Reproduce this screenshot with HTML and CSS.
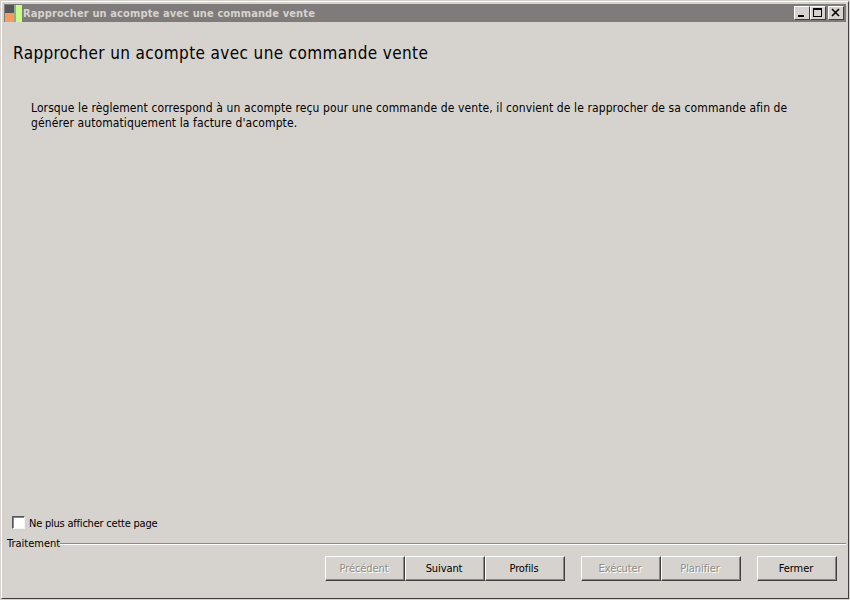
FILE: index.html
```html
<!DOCTYPE html>
<html lang="fr">
<head>
<meta charset="utf-8">
<title>Rapprocher un acompte avec une commande vente</title>
<link rel="stylesheet" href="styles.css">
</head>
<body>
<div class="window">
  <header class="titlebar">
    <svg class="app-icon" width="17" height="17" viewBox="0 0 17 17">
      <rect x="0" y="0" width="9" height="8" fill="#55555a"/>
      <rect x="0" y="8" width="9" height="9" fill="#f79a5e"/>
      <rect x="9" y="0" width="2" height="17" fill="#8fae8a"/>
      <rect x="11" y="0" width="6" height="17" fill="#c8fb88"/>
    </svg>
    <span class="title-text">Rapprocher un acompte avec une commande vente</span>
    <div class="caption-buttons">
      <button class="cap-btn" aria-label="Réduire"><svg width="14" height="12" viewBox="0 0 14 12"><rect x="3" y="8" width="6" height="2" fill="#000"/></svg></button>
      <button class="cap-btn" aria-label="Agrandir"><svg width="14" height="12" viewBox="0 0 14 12"><path d="M2 1h9v9H2z M3 3v6h7V3z" fill="#000" fill-rule="evenodd"/></svg></button>
      <button class="cap-btn cap-close" aria-label="Fermer"><svg width="14" height="12" viewBox="0 0 14 12"><path d="M3 2l7 7M10 2l-7 7" stroke="#000" stroke-width="1.6" fill="none"/></svg></button>
    </div>
  </header>
  <main class="content">
    <h1 class="page-title">Rapprocher un acompte avec une commande vente</h1>
    <p class="description">Lorsque le règlement correspond à un acompte reçu pour une commande de vente, il convient de le rapprocher de sa commande afin de générer automatiquement la facture d'acompte.</p>
  </main>
  <label class="skip-row"><span class="checkbox"></span><span class="skip-text">Ne plus afficher cette page</span></label>
  <div class="group-line"><span class="group-label">Traitement</span><span class="group-rule"></span></div>
  <footer class="actions">
    <div class="btn-group">
      <button class="btn" disabled>Précédent</button>
      <button class="btn">Suivant</button>
      <button class="btn">Profils</button>
    </div>
    <div class="btn-group">
      <button class="btn" disabled>Exécuter</button>
      <button class="btn" disabled>Planifier</button>
    </div>
    <button class="btn">Fermer</button>
  </footer>
</div>
</body>
</html>
```
FILE: styles.css
```css
* { box-sizing: border-box; }
html, body { margin: 0; padding: 0; width: 850px; height: 600px; overflow: hidden; }
body {
  font-family: "DejaVu Sans Condensed", "DejaVu Sans", sans-serif;
  font-size: 11px;
  color: #000;
  background: #d6d3ce;
  padding: 1px;
}
.window {
  width: 848px;
  height: 598px;
  display: flex;
  flex-direction: column;
  background: #d6d3ce;
  border-style: solid;
  border-width: 1px;
  border-color: #fff #404040 #404040 #fff;
  padding: 2px 2px 1px 2px;
}
.titlebar {
  height: 18px;
  flex: none;
  display: flex;
  align-items: center;
  background: #7f7b7b;
  color: #d6d3ce;
  font-weight: 700;
  padding-right: 2px;
}
.app-icon { flex: none; margin-left: 1px; }
.title-text { margin-left: 1px; font-size: 11px; letter-spacing: 0.12px; }
.caption-buttons { margin-left: auto; display: flex; }
.cap-btn {
  width: 16px;
  height: 14px;
  padding: 0;
  display: flex;
  align-items: center;
  justify-content: center;
  background: #d6d3ce;
  border: 1px solid;
  border-color: #fff #404040 #404040 #fff;
}
.cap-close { margin-left: 2px; }
.content { flex: 1; padding: 0 9px; }
.page-title {
  margin: 21px 0 0;
  font-size: 17px;
  line-height: 20px;
  font-weight: 400;
  letter-spacing: 0.38px;
}
.description {
  margin: 38px 0 0 18px;
  width: 775px;
  font-size: 12px;
  line-height: 15px;
  letter-spacing: 0.1px;
}
.skip-row {
  display: flex;
  align-items: center;
  gap: 4px;
  margin-left: 8px;
  height: 14px;
  font-size: 11px;
}
.skip-text { letter-spacing: -0.22px; }
.checkbox {
  width: 13px;
  height: 13px;
  margin-bottom: 2px;
  background: #fff;
  border-style: solid;
  border-width: 1px;
  border-color: #555 #f4f4f4 #f4f4f4 #555;
  box-shadow: inset 1px 1px 0 #888;
}
.group-line {
  display: flex;
  align-items: center;
  margin-top: 6px;
  margin-left: 3px;
  height: 14px;
}
.group-label { font-size: 11px; }
.group-rule {
  flex: 1;
  height: 2px;
  border-top: 1px solid #8c8a86;
  border-bottom: 1px solid #fff;
  margin-top: 2px;
}
.actions {
  display: flex;
  justify-content: flex-end;
  gap: 16px;
  margin-top: 6px;
  padding-right: 9px;
  height: 41px;
}
.btn-group { display: flex; }
.btn {
  width: 80px;
  height: 25px;
  padding: 0 2px 0 0;
  font: inherit;
  font-size: 11px;
  letter-spacing: -0.1px;
  color: #000;
  background: #d6d3ce;
  border: 1px solid;
  border-color: #fff #404040 #404040 #fff;
  box-shadow: inset -1px -1px 0 #888;
}
.btn:disabled { color: #8f8c88; text-shadow: 1px 1px 0 #fff; }
```
